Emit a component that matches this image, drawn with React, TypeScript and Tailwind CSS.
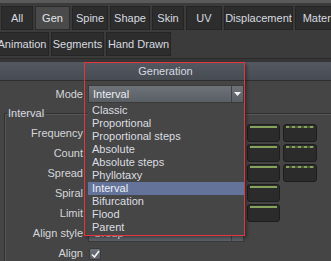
import React from "react";

const Tab = ({ label, w, active }: { label: string; w: number; active?: boolean }) => (
  <div
    style={{ width: w }}
    className={
      "h-[24px] shrink-0 flex items-center justify-center whitespace-nowrap overflow-hidden border " +
      (active ? "bg-[#4a4a4a] border-[#2c2c2c] text-[#e4e6ea]" : "bg-[#2d2d2d] border-[#252525] text-[#d8dbe0]")
    }
  >
    {label}
  </div>
);

const Slider = ({ dashed, w }: { dashed?: boolean; w: number }) => (
  <div style={{ width: w }} className="h-[18px] rounded-[3px] bg-[#2a2b2a] border border-[#1e1e1e] px-[2px] pt-[1px]">
    {dashed ? (
      <div className="h-[2px] bg-[repeating-linear-gradient(90deg,#85a35a_0_3px,#4c5a38_3px_6px)]" />
    ) : (
      <div className="h-[2px] bg-[#85a35a]" />
    )}
  </div>
);

const Row = ({ label, children }: { label: string; children?: React.ReactNode }) => (
  <div className="flex h-[18px] items-center">
    <div className="w-[78px] text-right pr-0 whitespace-nowrap">{label}</div>
    <div className="ml-[5px] flex items-center h-full">{children}</div>
  </div>
);

const items = [
  "Classic",
  "Proportional",
  "Proportional steps",
  "Absolute",
  "Absolute steps",
  "Phyllotaxy",
  "Interval",
  "Bifurcation",
  "Flood",
  "Parent",
];

export default function App() {
  return (
    <div className="relative w-[331px] h-[261px] overflow-hidden bg-[#454545] text-[11px] leading-[13px] text-[#d5d7db] font-['Liberation_Sans',Arial,sans-serif]">
      <div className="h-[3px] bg-[#5a5a5a]" />
      <div className="bg-[#3b3b3b] pt-[3px] pb-[2px]">
        <div className="flex gap-[2px] pl-[1px]">
          <Tab label="All" w={32} />
          <Tab label="Gen" w={35} active />
          <Tab label="Spine" w={36} />
          <Tab label="Shape" w={40} />
          <Tab label="Skin" w={32} />
          <Tab label="UV" w={36} />
          <Tab label="Displacement" w={69} />
          <Tab label="Materials" w={60} />
        </div>
        <div className="flex gap-[2px] ml-[-5px] mt-[2px]">
          <Tab label="Animation" w={54} />
          <Tab label="Segments" w={53} />
          <Tab label="Hand Drawn" w={65} />
        </div>
      </div>
      <div className="h-[1px] bg-[#2a2a2a]" />
      <div className="h-[3px] bg-[#363636]" />
      <div className="h-[18px] bg-gradient-to-b from-[#545961] to-[#474b52] flex items-center justify-center text-[#d6dae0]">
        Generation
      </div>
      <div className="h-[1px] bg-[#2e2e2e]" />
      <div className="pt-[4px]">
        <div className="flex h-[18px] items-center">
          <div className="w-[83px] text-right">Mode</div>
          <div className="ml-[5px] w-[156px] h-[18px] flex border border-[#3a3a3a] bg-gradient-to-b from-[#6e7279] to-[#5a5e65]">
            <div className="flex-1 flex items-center pl-[4px] text-[#eceef0]">Interval</div>
            <div className="w-[12px] border-l border-[#3e4146] flex items-center justify-center">
              <svg width="7" height="4" viewBox="0 0 7 4"><path d="M0 0H7L3.5 4Z" fill="#f2f2f2" /></svg>
            </div>
          </div>
        </div>
        <fieldset className="ml-[4px] mt-[4px] border-t border-l border-[#303030] shadow-[inset_1px_1px_0_#575757] pb-[10px]">
          <legend className="ml-[2px] px-[1px] text-[#d8dbe0]">Interval</legend>
          <div className="flex flex-col gap-[2px] pt-[4px]">
            <Row label="Frequency">
              <div className="ml-[159px] flex gap-[3px]"><Slider w={33} /><Slider w={34} dashed /></div>
            </Row>
            <Row label="Count">
              <div className="ml-[159px] flex gap-[3px]"><Slider w={33} /><Slider w={34} dashed /></div>
            </Row>
            <Row label="Spread">
              <div className="ml-[159px] flex gap-[3px]"><Slider w={33} /><Slider w={34} dashed /></div>
            </Row>
            <Row label="Spiral">
              <div className="ml-[159px] flex gap-[3px]"><Slider w={33} /></div>
            </Row>
            <Row label="Limit">
              <div className="ml-[159px] flex gap-[3px]"><Slider w={33} /></div>
            </Row>
            <Row label="Align style">
              <div className="w-[156px] h-[18px] flex border border-[#3a3a3a] bg-gradient-to-b from-[#6a6e75] to-[#5a5e65]">
                <div className="flex-1 flex items-center pl-[4px] text-[#eceef0]">Group</div>
                <div className="w-[12px] border-l border-[#3e4146]" />
              </div>
            </Row>
            <Row label="Align">
              <div className="w-[12px] h-[12px] mt-[2px] ml-[1px] rounded-[2px] border border-[#3a3a3a] bg-gradient-to-b from-[#6c7077] to-[#585c63] flex items-center justify-center">
                <svg width="9" height="8" viewBox="0 0 9 8"><path d="M1 4.5L3.5 7L8 1" stroke="#f4f4f4" strokeWidth="1.6" fill="none" /></svg>
              </div>
            </Row>
          </div>
        </fieldset>
      </div>

      {/* dropdown list */}
      <div className="absolute left-[88px] top-[104px] w-[156px] h-[131px] bg-[#464646]">
        {items.map((it) => (
          <div
            key={it}
            className={
              "h-[13px] flex items-center pl-[4px] whitespace-nowrap " +
              (it === "Interval" ? "bg-[#64739a] text-[#eef0f4]" : "text-[#dcdee2]")
            }
          >
            {it}
          </div>
        ))}
      </div>
      {/* red highlight frame */}
      <div className="absolute left-[84px] top-[62px] w-[161px] h-[174px] border border-[#e8343c] shadow-[2px_2px_3px_rgba(0,0,0,0.35)] pointer-events-none" />
    </div>
  );
}
